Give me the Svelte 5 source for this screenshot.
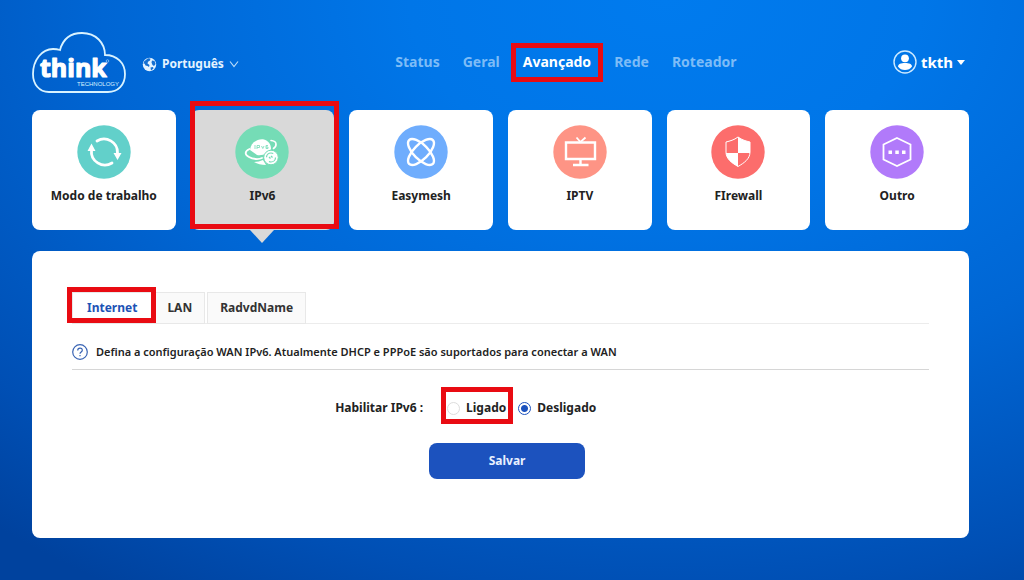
<script>
  const nav = ['Status', 'Geral', 'Avançado', 'Rede', 'Roteador'];
  const cards = [
    { name: 'Modo de trabalho', icon: 'cycle', color: '#62d0ca' },
    { name: 'IPv6', icon: 'ipv6', color: '#75dcb6' },
    { name: 'Easymesh', icon: 'mesh', color: '#6fadfd' },
    { name: 'IPTV', icon: 'tv', color: '#fe9485' },
    { name: 'FIrewall', icon: 'shield', color: '#fc6d6c' },
    { name: 'Outro', icon: 'more', color: '#b17afa' }
  ];
  const tabs = ['Internet', 'LAN', 'RadvdName'];
  let section = $state('Avançado');
  let card = $state('IPv6');
  let tab = $state('Internet');
  let enabled = $state('off');
</script>

<div class="page">
  <header>
    <div class="brand">
      <svg class="logo" viewBox="0 0 94 61" role="img" aria-label="think technology">
        <path d="M17 60C7 60 1 52 1 42C1 28 10 17 21 17Q25 17 28 18C31 7 39 1 50 1C64 1 73 11 73 23C85 23 93 31 93 42C93 53 86 60 76 60Z" fill="none" stroke="#d9f3ff" stroke-width="1.8" />
        <text x="8" y="45" class="word">think</text>
        <text x="45" y="54" class="tech">TECHNOLOGY</text>
        <circle cx="75.500" cy="29" r="1.300" fill="none" stroke="#9fd4ff" stroke-width=".7" />
      </svg>
      <button class="lang">
        <svg width="15" height="15" viewBox="0 0 15 15" aria-hidden="true">
          <circle cx="7.500" cy="7.500" r="6.700" fill="#e4f3ff" />
          <path d="M6 1.200L8.500 1.500L8 3.500L6 4.800L5.500 6.500L7.500 8L7 10L5.500 9L3.500 8.500L2.500 6.500L1.500 7L2 4.500ZM10 3.500L12.500 4L13.600 7L12 9L10.500 8L9.500 5.500ZM8.500 10.500L11 10L11.500 11.500L9 13.500Z" fill="#1670d2" />
        </svg>
        <span>Português</span>
        <svg width="10" height="8" viewBox="0 0 10 8" aria-hidden="true"><path d="M1 1.500L5 6.500L9 1.500" fill="none" stroke="#b9dcfa" stroke-width="1.200" /></svg>
      </button>
    </div>
    <nav>
      {#each nav as item}
        <a href="#{item}" class:active={section === item} onclick={() => (section = item)}>{item}{#if item === 'Avançado'}<i class="mark"></i>{/if}</a>
      {/each}
    </nav>
    <button class="user">
      <svg width="24" height="24" viewBox="0 0 24 24" aria-hidden="true">
        <circle cx="12" cy="12" r="11" fill="none" stroke="#cdeaff" stroke-width="1.400" />
        <circle cx="12" cy="8.300" r="3.900" fill="#fff" />
        <path d="M5 16.500C5 14 8 13 12 13S19 14 19 16.500C17.500 19 15 20 12 20S6.500 19 5 16.500Z" fill="#fff" />
      </svg>
      <span>tkth</span>
      <svg width="8" height="5" viewBox="0 0 8 5" aria-hidden="true"><path d="M0 0H8L4 5Z" fill="#fff" /></svg>
    </button>
  </header>

  <div class="cards">
    {#each cards as c}
      <button class="card" class:selected={card === c.name} onclick={() => (card = c.name)}>
        <svg class="icon" viewBox="0 0 54 54" fill="none" stroke="#fff" stroke-width="2.400" aria-hidden="true">
          <circle cx="27" cy="27" r="26.700" fill={c.color} stroke="none" />
          {#if c.icon === 'cycle'}
            <path d="M20 16A13.500 13.500 0 0 1 40.500 28" stroke-width="2.800" stroke-linecap="round" />
            <path d="M14.500 25A13.500 13.500 0 0 0 35 38" stroke-width="2.800" stroke-linecap="round" />
            <path d="M36.500 28H44.500L40.500 35ZM10.500 26L14.500 18.500L18.500 26Z" fill="#fff" stroke="none" />
          {:else if c.icon === 'ipv6'}
            <path d="M15 25C16 17 23 13.500 29 14.500C33 15.500 36 19 36 24C34 28 28 31 22 30Z" fill="#fff" stroke="none" />
            <path d="M14.500 24C9 26.500 10 30 14 32C18 34.500 24 34.500 27 33" stroke-width="1.800" stroke-linecap="round" />
            <path d="M36 15.500C42.500 16 42 21 38.500 23.500" stroke-width="1.600" stroke-linecap="round" />
            <path d="M19 37Q24 37 28 35L31 40Q24 40 19 37Z" fill="#fff" stroke="none" />
            <circle cx="36" cy="32.500" r="7.300" fill="#fff" stroke={c.color} stroke-width="1" />
            <circle cx="36" cy="32.500" r="4.500" stroke={c.color} stroke-width="1.200" stroke-dasharray="9 5" />
            <path d="M34 32L35.500 33.500M36 31L37.500 32.500" stroke={c.color} stroke-width="1.300" />
            <path d="M20 20V24M22 24V20.500H24.500V22.500H22M26.500 21L27.800 23.500L29 21M33 20.500H31V23.500H33V22H31" stroke={c.color} stroke-width=".8" />
          {:else if c.icon === 'mesh'}
            <ellipse cx="27" cy="27" rx="16.800" ry="7.300" transform="rotate(45 27 27)" />
            <ellipse cx="27" cy="27" rx="16.800" ry="7.300" transform="rotate(-45 27 27)" />
          {:else if c.icon === 'tv'}
            <path d="M13 17.500H42V34H13ZM27.500 34V39.500M20 40H35.500" />
            <path d="M23.500 12.500L27.500 17L32.500 12.500" stroke-width="1.800" />
          {:else if c.icon === 'shield'}
            <path d="M27 12C31 15 35 16 39 17V27C39 34 33 38 27 41.500C21 38 15 34 15 27V17C19 16 23 15 27 12Z" stroke-width="1" />
            <path d="M27 12C31 15 35 16 39 17V28H27ZM27 28H15C15.500 34 21 38.500 27 41.500Z" fill="#fff" stroke="none" />
          {:else}
            <path d="M27 13L40.500 19.500V34.500L27 41L13.500 34.500V19.500Z" stroke-width="1.800" />
            <path d="M18.500 25.500H22V29H18.500ZM25.300 25.500H28.800V29H25.300ZM32 25.500H35.500V29H32Z" fill="#fff" stroke="none" />
          {/if}
        </svg>
        <span>{c.name}</span>
        {#if c.name === 'IPv6'}<i class="mark"></i>{/if}
      </button>
    {/each}
  </div>

  <main>
    <div class="tabs" role="tablist">
      {#each tabs as t}
        <button role="tab" aria-selected={tab === t} class:current={tab === t} onclick={() => (tab = t)}>{t}{#if t === 'Internet'}<i class="mark"></i>{/if}</button>
      {/each}
    </div>
    <p class="hint">
      <svg width="16" height="16" viewBox="0 0 16 16" fill="none" stroke="#3964b4" aria-hidden="true">
        <circle cx="8" cy="8" r="7.300" stroke-width="1.200" />
        <path d="M5.700 6.500C5.700 3.300 10.300 3.300 10.300 6.200C10.300 8 8 7.900 8 9.800M8 11V12.300" stroke-width="1.200" />
      </svg>
      <span>Defina a configuração WAN IPv6. Atualmente DHCP e PPPoE são suportados para conectar a WAN</span>
    </p>
    <form onsubmit={(e) => e.preventDefault()}>
      <span class="label" id="ipv6-label">Habilitar IPv6&nbsp;:</span>
      <div class="radios" role="radiogroup" aria-labelledby="ipv6-label">
        <label><input type="radio" name="ipv6" value="on" bind:group={enabled} />Ligado<i class="mark"></i></label>
        <label><input type="radio" name="ipv6" value="off" bind:group={enabled} />Desligado</label>
      </div>
      <button class="save">Salvar</button>
    </form>
  </main>
</div>

<style>
  :global(body) {
    margin: 0;
  }
  .page, .page * {
    box-sizing: border-box;
  }
  .page {
    min-height: 100vh;
    display: flex;
    flex-direction: column;
    padding: 28px 55px 42px 32px;
    background: radial-gradient(ellipse 100% 120% at 65% 0, #007bee 0, #0076e8 25%, #0066d4 55%, #004fb4 85%, #00429e 100%);
    color: #222;
    font: 700 12px/16px "Noto Sans", "Open Sans", sans-serif;
  }
  button {
    font: inherit;
    color: inherit;
    border: 0;
    background: none;
    padding: 0;
    cursor: pointer;
  }
  header {
    display: flex;
    align-items: center;
    justify-content: space-between;
    height: 68px;
    color: #fff;
  }
  .brand, .lang, .user {
    display: flex;
    align-items: center;
  }
  .brand {
    gap: 16px;
  }
  .logo {
    width: 94px;
    height: 61px;
  }
  .word {
    font: 700 25px "Open Sans", sans-serif;
    fill: #fff;
    stroke: #fff;
    stroke-width: 1.2px;
    stroke-linejoin: round;
  }
  .tech {
    font: 400 6px "Liberation Sans", sans-serif;
    fill: #d9f3ff;
  }
  .lang {
    gap: 5px;
    padding-top: 4px;
    color: #e4f3ff;
  }
  nav {
    display: flex;
    gap: 23px;
    font-size: 14px;
  }
  nav a {
    position: relative;
    color: #7dbcf7;
    text-decoration: none;
  }
  nav a.active {
    color: #fff;
  }
  .user {
    gap: 4px;
    margin-right: 4px;
    font-size: 15px;
  }
  .mark {
    position: absolute;
    z-index: 1;
    border: 5px solid #e90b12;
    pointer-events: none;
  }
  nav .mark {
    inset: -11px -12px -12px;
  }
  .cards {
    display: grid;
    grid-template-columns: repeat(6, 1fr);
    gap: 15px;
    margin-top: 14px;
  }
  .card {
    position: relative;
    display: flex;
    flex-direction: column;
    align-items: center;
    gap: 9px;
    height: 120px;
    padding-top: 15px;
    border-radius: 8px;
    background: #fff;
  }
  .card.selected {
    background: #d9d9d9;
  }
  .card.selected::after {
    content: "";
    position: absolute;
    top: 100%;
    left: 50%;
    margin-left: -12px;
    border: 12px solid transparent;
    border-top: 13px solid #d9d9d9;
    border-bottom: 0;
  }
  .icon {
    width: 54px;
    height: 54px;
  }
  .card .mark {
    inset: -9px -5px 1px -1px;
  }
  main {
    flex: 1;
    margin-top: 21px;
    padding: 41px 40px 32px;
    border-radius: 8px;
    background: #fff;
  }
  .tabs {
    display: flex;
    gap: 2px;
    border-bottom: 1px solid #ececec;
  }
  .tabs button {
    position: relative;
    height: 32px;
    margin-bottom: -1px;
    padding: 0 12px;
    border: 1px solid #e8e8e8;
    background: #fafafa;
    color: #333;
  }
  .tabs .current {
    padding: 0 14px;
    background: #fff;
    color: #1c52b5;
  }
  .tabs .mark {
    inset: -6px -5px 0 -6px;
  }
  .hint {
    display: flex;
    align-items: center;
    gap: 8px;
    margin: 0;
    padding: 20px 0 9px;
    border-bottom: 1px solid #d6d6d6;
    font-size: 11px;
    font-weight: 600;
    color: #222;
  }
  form {
    display: grid;
    grid-template-columns: 10fr 14fr;
    align-items: center;
    row-gap: 27px;
    margin-top: 30px;
  }
  .label {
    justify-self: end;
    padding-right: 6px;
  }
  .radios {
    display: flex;
    gap: 12px;
    padding-left: 18px;
  }
  .radios label {
    position: relative;
    display: flex;
    align-items: center;
    gap: 6px;
  }
  .radios .mark {
    inset: -13px -7px -8px -6px;
  }
  input {
    appearance: none;
    width: 13px;
    height: 13px;
    margin: 0;
    border: 1px solid #ddd;
    border-radius: 50%;
  }
  input:checked {
    border-color: #1c52be;
    background: radial-gradient(circle closest-side, #1c52be 0 3px, #fff 4px);
  }
  .save {
    grid-column: 2;
    width: 156px;
    height: 36px;
    border-radius: 8px;
    background: #1c52be;
    color: #e8f0ff;
  }
</style>
